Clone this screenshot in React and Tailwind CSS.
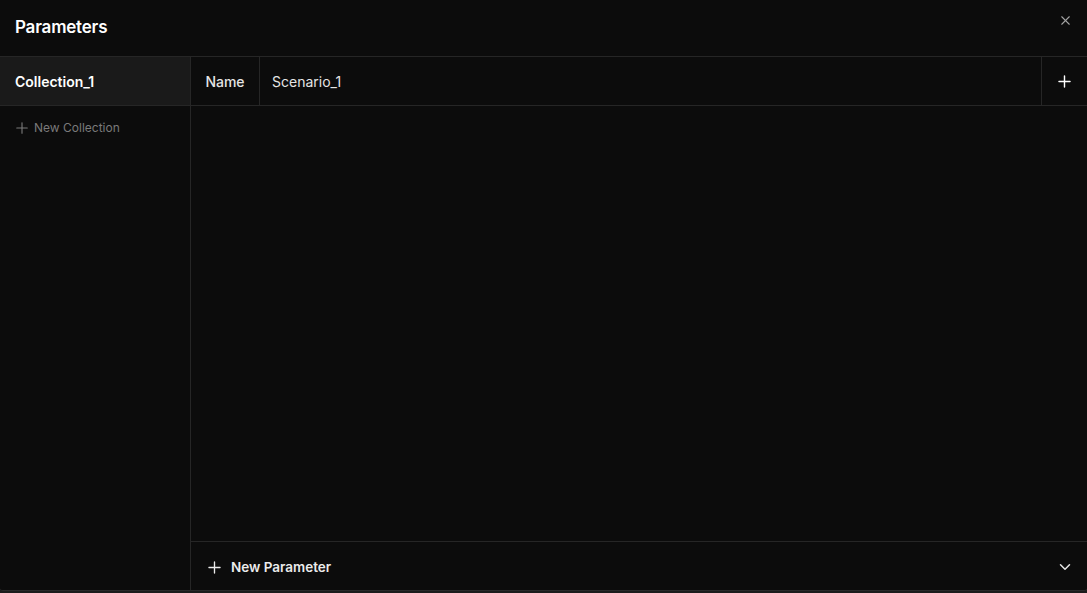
import { X, Plus, ChevronDown } from "lucide-react";

const App = () => {
  return (
    <div
      className="h-screen w-full bg-[#1c1c1c] overflow-hidden"
      style={{ fontFamily: "Inter, 'Noto Sans', sans-serif" }}
    >
      <div className="h-[591px] flex flex-col bg-[#0c0c0c] border-b border-[#2a2a2a] rounded-b-[3px] text-white">
        {/* header */}
        <div className="h-[57px] shrink-0 flex items-center justify-between pl-[15px] pr-[14px] border-b border-[#262626]">
          <h1 className="text-[17px] font-semibold tracking-[-0.2px] -mt-[1px]">Parameters</h1>
          <button className="text-[#a3a3a3] -mt-[16px]">
            <X size={15} strokeWidth={1.7} />
          </button>
        </div>

        <div className="flex flex-1 min-h-0">
          {/* collections */}
          <aside className="w-[191px] shrink-0 border-r border-[#262626] flex flex-col">
            <div className="h-[49px] flex items-center pl-[15px] bg-[#1a1a1a] border-b border-[#262626] text-[14px] font-semibold">
              Collection_1
            </div>
            <button className="flex items-center gap-[3px] pl-[13px] mt-[13px] text-[12px] text-[#7a7a7a]">
              <Plus size={18} strokeWidth={1.5} />
              New Collection
            </button>
          </aside>

          {/* scenario */}
          <section className="flex-1 flex flex-col min-w-0">
            <div className="h-[49px] shrink-0 flex border-b border-[#262626] text-[14px]">
              <div className="w-[69px] flex items-center justify-center border-r border-[#262626] text-[#e5e5e5] font-medium">
                Name
              </div>
              <div className="flex-1 flex items-center pl-[12px] text-[#e5e5e5]">Scenario_1</div>
              <button className="w-[46px] flex items-center justify-center border-l border-[#262626] text-white">
                <Plus size={19} strokeWidth={1.8} />
              </button>
            </div>

            <div className="flex-1" />

            <div className="h-[49px] shrink-0 flex items-center justify-between border-t border-[#262626] pt-[2px] pr-[13px]">
              <button className="flex items-center gap-[7px] pl-[14px] text-[13.5px] font-semibold text-[#ebebeb]">
                <Plus size={19} strokeWidth={1.7} />
                New Parameter
              </button>
              <ChevronDown size={18} strokeWidth={2} className="text-[#e5e5e5]" />
            </div>
          </section>
        </div>
      </div>
    </div>
  );
};

export default App;
